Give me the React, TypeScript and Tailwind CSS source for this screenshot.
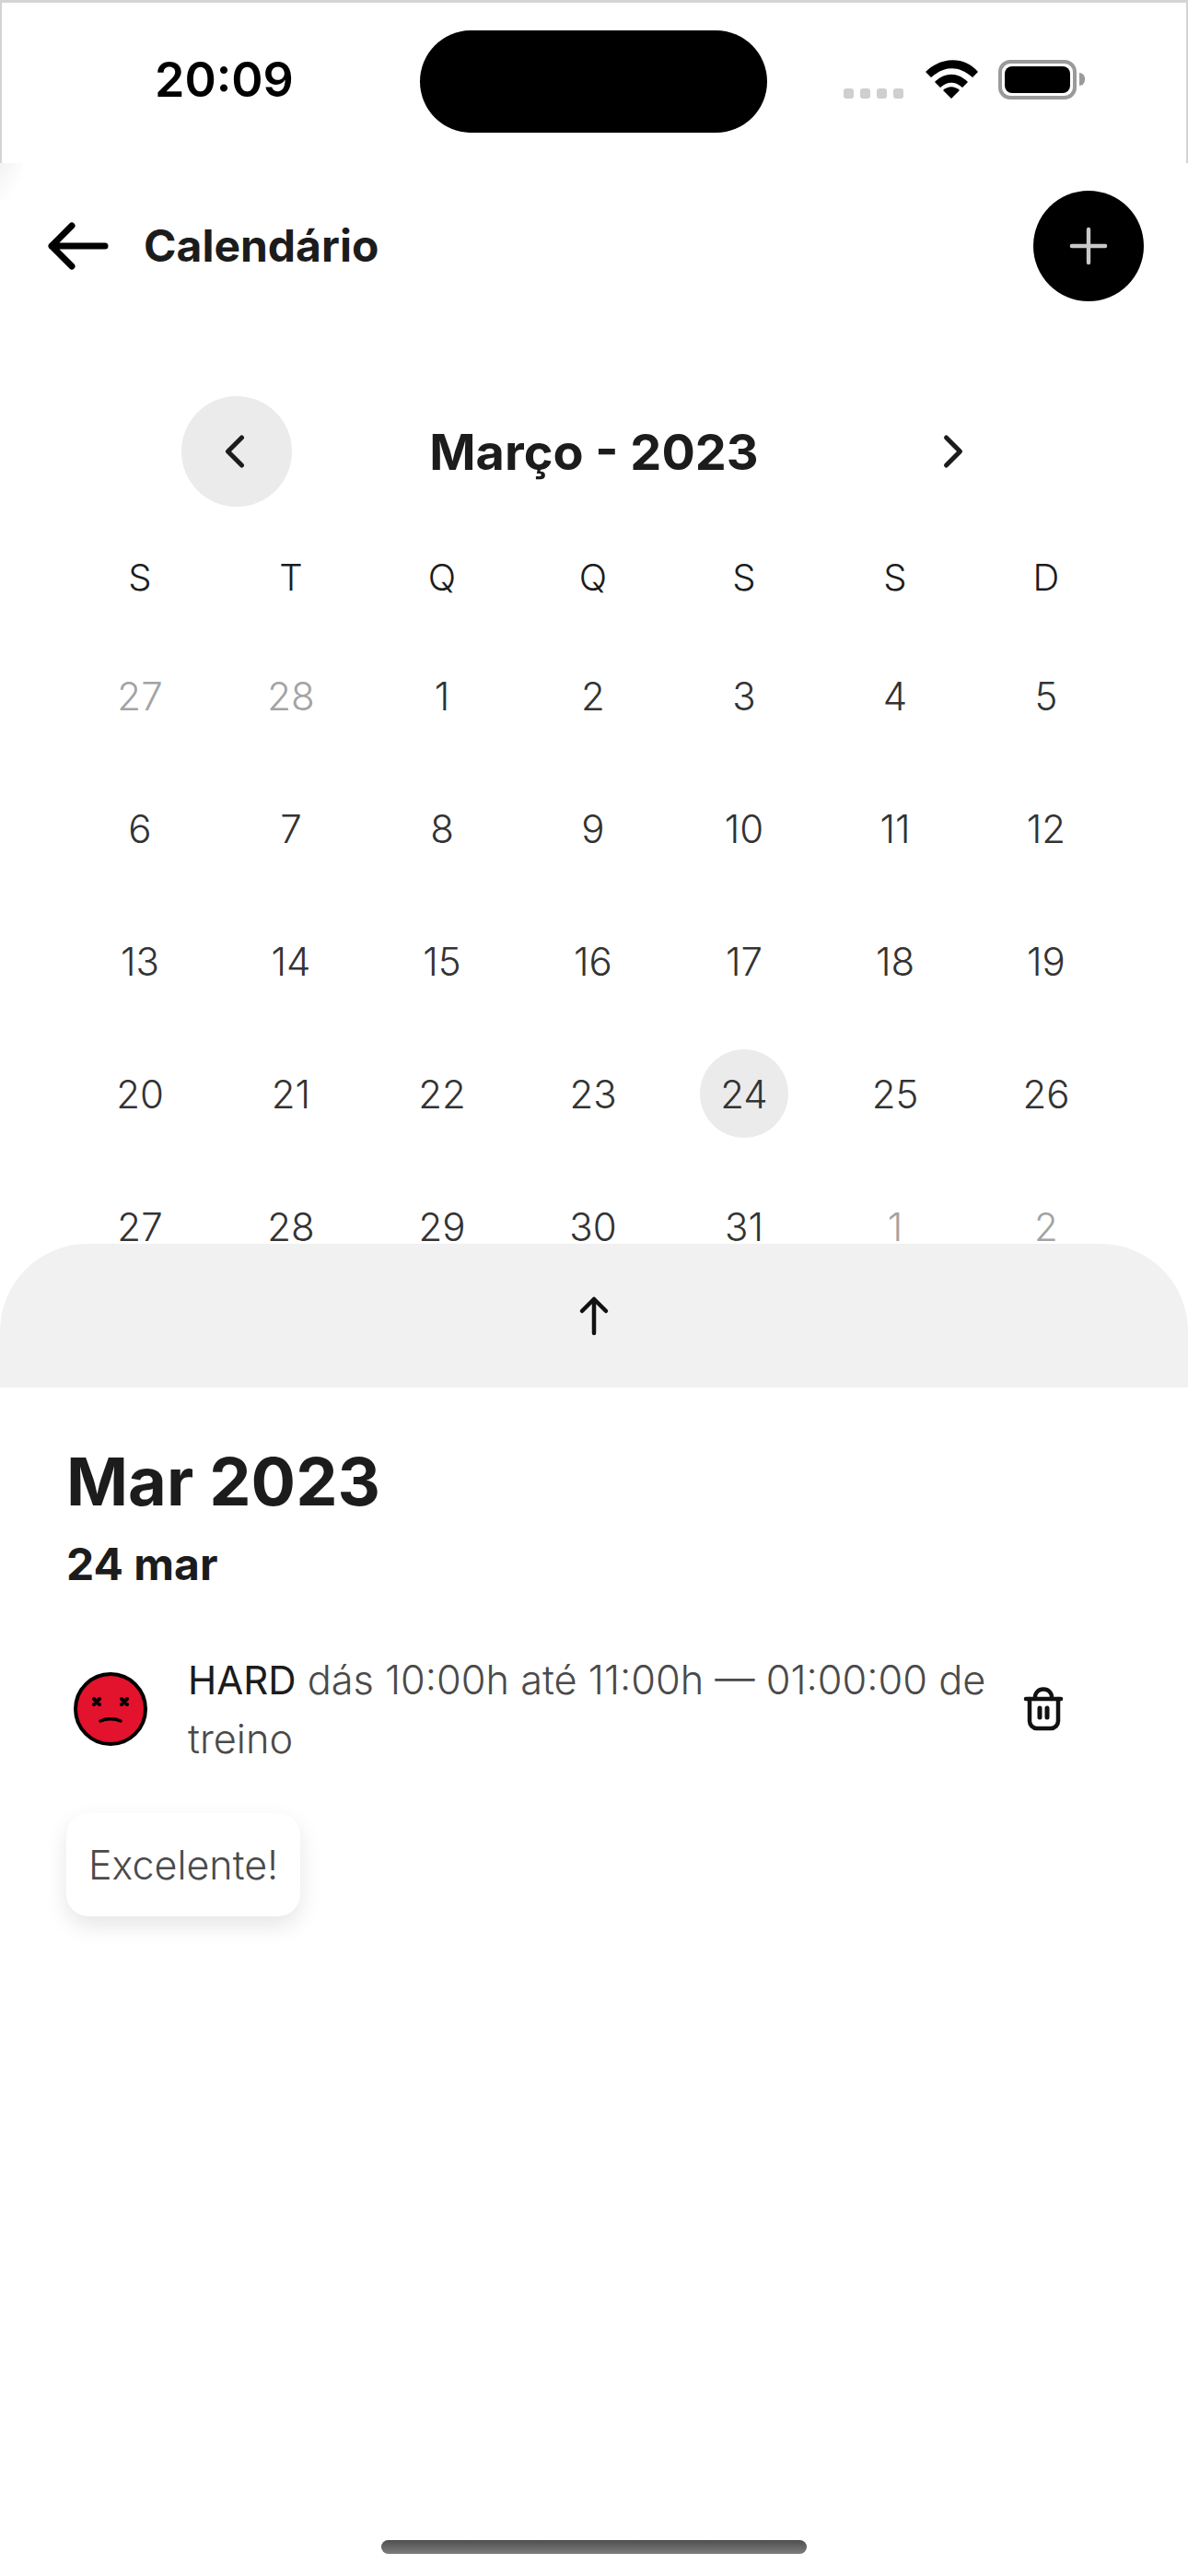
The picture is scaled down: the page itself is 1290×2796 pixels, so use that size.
import { ChevronLeft, ChevronRight, Plus } from "lucide-react";

const weekDays = ["S", "T", "Q", "Q", "S", "S", "D"];

const days = [
  27, 28, 1, 2, 3, 4, 5, 6, 7, 8, 9, 10, 11, 12, 13, 14, 15, 16, 17, 18, 19, 20, 21, 22, 23, 24, 25, 26, 27, 28, 29, 30,
  31, 1, 2,
];

function StatusBar() {
  return (
    <div className="h-[177px] border-x-2 border-t-[3px] border-[#d4d4d4] bg-white flex items-center relative">
      <span className="absolute left-[166px] top-[54px] text-[52px] leading-[60px] font-semibold text-black">20:09</span>
      <div className="absolute left-[454px] top-[30px] w-[377px] h-[111px] rounded-full bg-black" />
      <div className="absolute left-[914px] top-[93px] flex gap-[7px]">
        <div className="w-[11px] h-[11px] rounded-[3px] bg-[#cfcfcf]" />
        <div className="w-[11px] h-[11px] rounded-[3px] bg-[#cfcfcf]" />
        <div className="w-[11px] h-[11px] rounded-[3px] bg-[#cfcfcf]" />
        <div className="w-[11px] h-[11px] rounded-[3px] bg-[#cfcfcf]" />
      </div>
      <svg className="absolute left-[1002px] top-[62px]" width="60" height="44" viewBox="0 0 60 44">
        <path d="M0 13 C17 -4 43 -4 57 13 L51 19 C36 6 21 6 6 19 Z" fill="#000" transform="translate(1 0)" />
        <path d="M11 24 C22 13 36 13 47 24 L41 30 C33 23 25 23 17 30 Z" fill="#000" />
        <path d="M20 33 C26 28 32 28 38 33 L29 42 Z" fill="#000" />
      </svg>
      <div className="absolute left-[1082px] top-[62px] w-[85px] h-[43px] rounded-[13px] border-[4px] border-[#9a9a9a] p-[3px]">
        <div className="w-full h-full rounded-[8px] bg-black" />
      </div>
      <div className="absolute left-[1170px] top-[76px] w-[6px] h-[14px] rounded-r-full bg-[#9a9a9a]" />
    </div>
  );
}

function Header() {
  return (
    <div className="h-[180px] flex items-center justify-between pl-[50px] pr-[48px]">
      <div className="flex items-center">
        <svg width="68" height="54" viewBox="0 0 68 54" fill="none" stroke="#000" strokeWidth="7" strokeLinecap="round" strokeLinejoin="round">
          <path d="M64 27H6M28 5L6 27l22 22" />
        </svg>
        <span className="ml-[38px] text-[48px] font-bold text-[#1c1c1c]">Calendário</span>
      </div>
      <button className="w-[120px] h-[120px] rounded-full bg-black flex items-center justify-center">
        <Plus size={62} strokeWidth={1.7} color="#c8c8c8" />
      </button>
    </div>
  );
}

function Calendar() {
  return (
    <div className="h-[993px] overflow-hidden">
      <div className="mt-[73px] flex items-center pl-[197px] relative h-[120px]">
        <button className="w-[120px] h-[120px] rounded-full bg-[#ebebeb] flex items-center justify-center shrink-0 pr-[4px]">
          <ChevronLeft size={60} strokeWidth={2} color="#1c1c1c" />
        </button>
        <span className="absolute left-0 right-0 text-center text-[54px] font-bold text-[#1c1c1c]">Março - 2023</span>
        <button className="absolute left-[975px] w-[120px] h-[120px] flex items-center justify-center">
          <ChevronRight size={60} strokeWidth={2} color="#1c1c1c" />
        </button>
      </div>
      <div className="grid grid-cols-7 w-[1148px] ml-[70px] mt-[52px] mb-[31px]">
        {weekDays.map((d, i) => (
          <div key={i} className="text-center text-[40px] leading-[50px] font-light text-[#1c1c1c]">
            {d}
          </div>
        ))}
      </div>
      <div className="grid grid-cols-7 w-[1148px] ml-[70px]">
        {days.map((d, i) => {
          const muted = i < 2 || i > 32;
          const selected = i === 25;
          return (
            <div key={i} className="h-[144px] flex items-center justify-center">
              <div
                className={`w-[96px] h-[96px] rounded-full flex items-center justify-center text-[42px] font-light ${
                  selected ? "bg-[#ebebeb]" : ""
                } ${muted ? "text-[#a3a3a3]" : "text-[#333333]"}`}
              >
                {d}
              </div>
            </div>
          );
        })}
      </div>
    </div>
  );
}

function SadFace() {
  return (
    <svg width="84" height="84" viewBox="0 0 84 84" fill="none" stroke="#000" strokeLinecap="round">
      <circle cx="42" cy="42" r="38" fill="#e3122d" strokeWidth="4" />
      <path d="M24 31l6 6M30 31l-6 6M54 31l6 6M60 31l-6 6" strokeWidth="4" />
      <path d="M31 55c6-3 16-3 22 0" strokeWidth="3.5" />
    </svg>
  );
}

function TrashIcon() {
  return (
    <svg width="44" height="48" viewBox="0 0 44 48" fill="none" stroke="#111" strokeWidth="4.5" strokeLinecap="round" strokeLinejoin="round">
      <path d="M3 13H41" />
      <path d="M7 13V37a8 8 0 0 0 8 8H30a8 8 0 0 0 8-8V13" />
      <path d="M13 13V11a8.500 8.500 0 0 1 8.500-8.500h1a8.500 8.500 0 0 1 8.500 8.500v2" />
      <path d="M18 23V33M26 23V33" strokeWidth="5" />
    </svg>
  );
}

export default function App() {
  return (
    <div className="w-[1290px] h-[2796px] bg-white relative overflow-hidden font-['Inter',sans-serif]">
      <StatusBar />
      <div className="absolute left-0 top-[177px] w-[25px] h-[40px] bg-gradient-to-br from-[#f3f3f3] to-white to-70%" />
      <div className="relative">
        <Header />
        <Calendar />
      </div>
      <div className="h-[156px] bg-[#f1f1f1] rounded-t-[95px] flex justify-center pt-[56px]">
        <svg width="34" height="44" viewBox="0 0 34 44" fill="none" stroke="#111" strokeWidth="4.5" strokeLinecap="round" strokeLinejoin="round">
          <path d="M17 41V4M4 17L17 4l13 13" />
        </svg>
      </div>
      <div className="px-[72px]">
        <h1 className="mt-[58px] text-[72px] leading-[88px] font-bold text-[#1c1c1c]">Mar 2023</h1>
        <h2 className="mt-[16px] text-[48px] leading-[60px] font-bold text-[#1c1c1c]">24 mar</h2>
        <div className="mt-[64px] flex items-center">
          <div className="ml-[6px] shrink-0">
            <SadFace />
          </div>
          <p className="ml-[42px] w-[880px] text-[43.3px] leading-[62.5px] font-light text-[#4a4a4a]">
            <span className="font-normal text-[42px] text-[#1c1c1c]">HARD</span> dás 10:00h até 11:00h — 01:00:00 de treino
          </p>
          <div className="ml-[27px]">
            <TrashIcon />
          </div>
        </div>
        <div className="mt-[50px] inline-block px-[24px] py-[28px] rounded-[24px] bg-white shadow-[0_10px_24px_rgba(0,0,0,0.1)] text-[43px] leading-[56px] font-light text-[#4a4a4a]">
          Excelente!
        </div>
      </div>
      <div className="absolute left-[414px] top-[2757px] w-[462px] h-[15px] rounded-full bg-gradient-to-b from-[#4f4f4f] to-[#7d7d7d]" />
    </div>
  );
}
